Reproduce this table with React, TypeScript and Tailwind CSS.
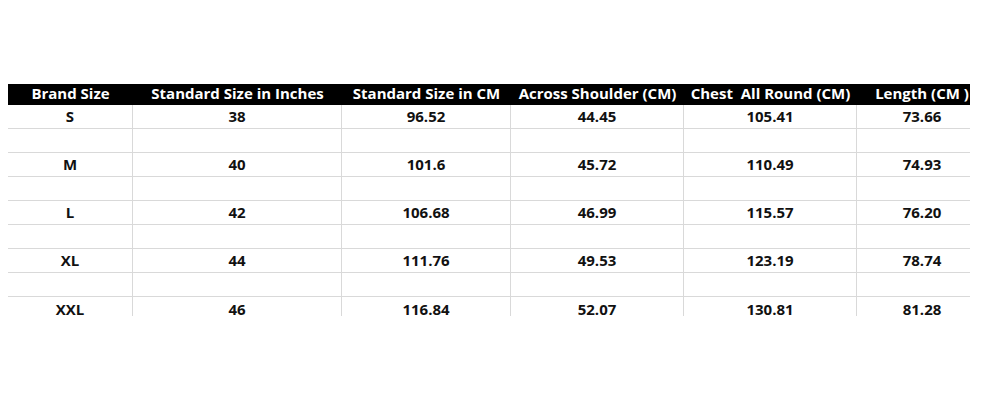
import React from "react";

const headers = [
  "Brand Size",
  "Standard Size in Inches",
  "Standard Size in CM",
  "Across Shoulder (CM)",
  "Chest\u00a0 All Round (CM)",
  "Length (CM )",
];

const data: string[][] = [
  ["S", "38", "96.52", "44.45", "105.41", "73.66"],
  ["M", "40", "101.6", "45.72", "110.49", "74.93"],
  ["L", "42", "106.68", "46.99", "115.57", "76.20"],
  ["XL", "44", "111.76", "49.53", "123.19", "78.74"],
  ["XXL", "46", "116.84", "52.07", "130.81", "81.28"],
];

const rows: (string[] | null)[] = [];
data.forEach((r, i) => {
  rows.push(r);
  if (i < data.length - 1) rows.push(null);
});

const grid = "grid grid-cols-[125px_209px_169px_173px_173px_130px] w-[979px]";

export default function App() {
  return (
    <div className="w-[1000px] h-[400px] bg-white pt-[84px] pl-[8px]" style={{ fontFamily: "'Open Sans', sans-serif" }}>
      <div className="w-[962px] overflow-hidden">
        <div className={`${grid} bg-black h-[21px]`}>
          {headers.map((h) => (
            <div key={h} className="flex items-center justify-center pb-[3px] text-white font-bold text-[15px] whitespace-nowrap leading-none">
              {h}
            </div>
          ))}
        </div>
        {rows.map((r, i) => {
          const last = i === rows.length - 1;
          return (
            <div
              key={i}
              className={`${grid} h-[24px] ${last ? "" : "border-b border-[#d9d9d9]"}`}
            >
              {Array.from({ length: 6 }).map((_, j) => (
                <div
                  key={j}
                  className={`flex justify-center text-[#111] font-bold text-[15px] leading-none ${j < 5 ? "border-r border-[#d9d9d9]" : ""} ${last ? "h-[19px] items-start pt-[5px]" : "items-center"}`}
                >
                  {r ? r[j] : ""}
                </div>
              ))}
            </div>
          );
        })}
      </div>
    </div>
  );
}
